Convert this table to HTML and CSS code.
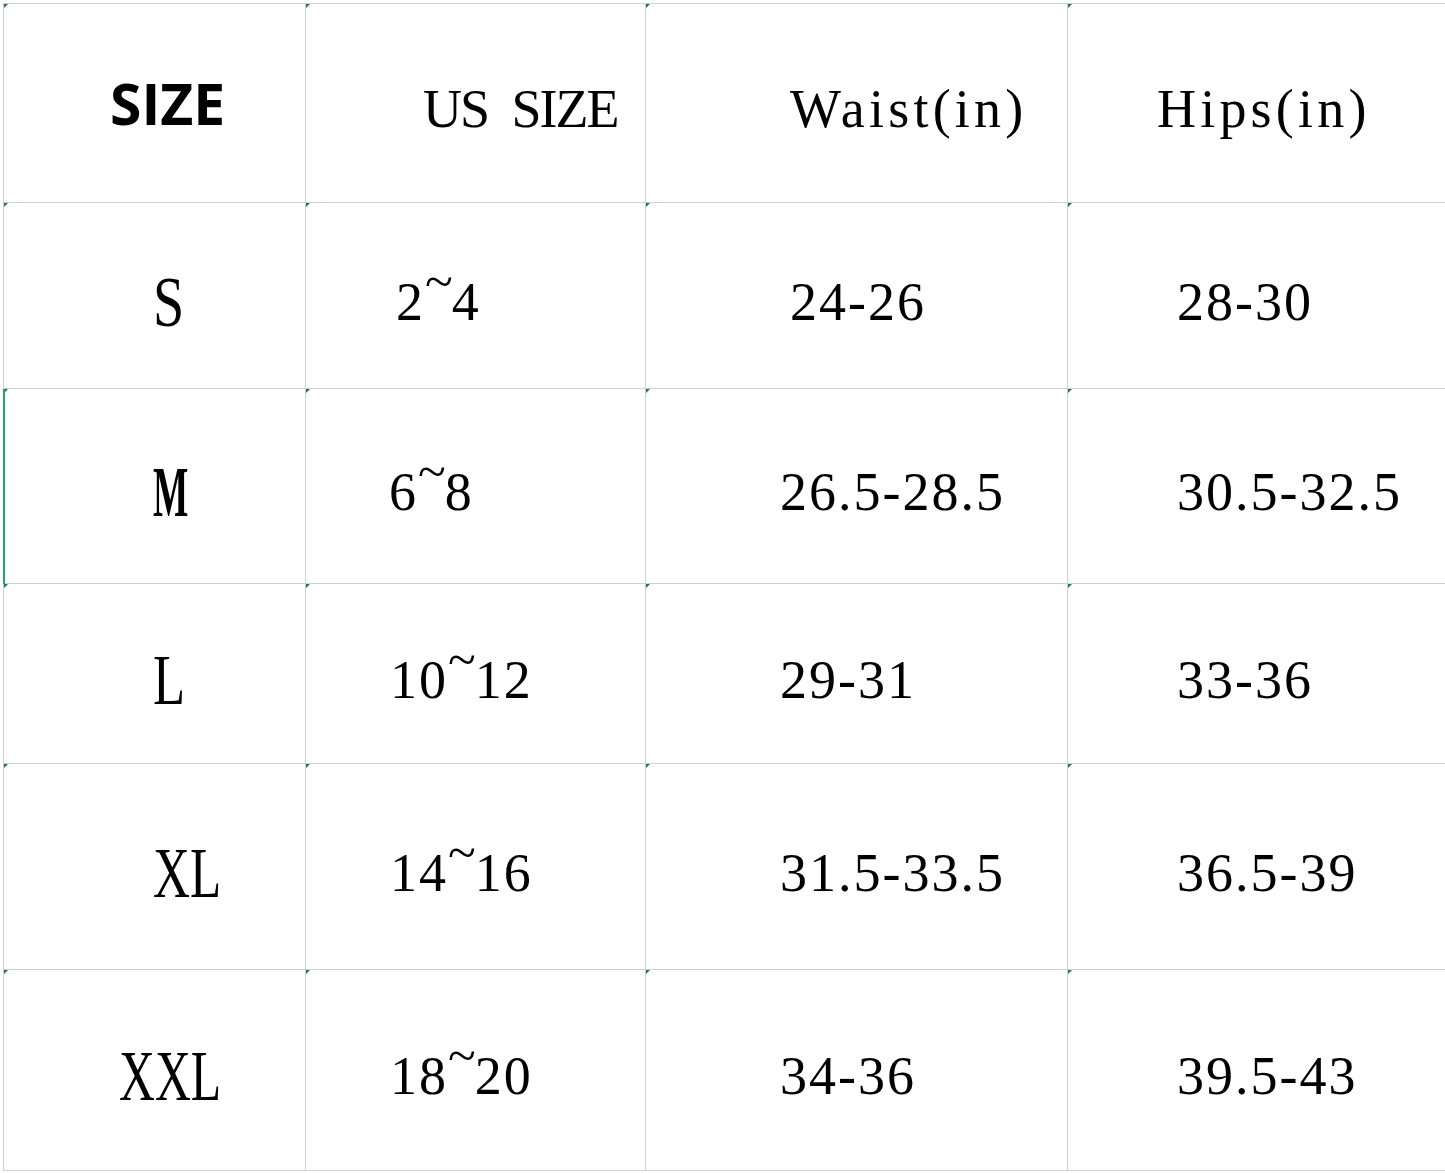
FILE: index.html
```html
<!DOCTYPE html>
<html lang="en">
<head>
<meta charset="utf-8">
<title>Size Chart</title>
<link rel="stylesheet" href="styles.css">
</head>
<body>
<div class="sheet">
  <div class="cell c1 hdr-sans pl-size"><span class="t">SIZE</span></div>
  <div class="cell c2 hdr pl-us"><span class="t">US SIZE</span></div>
  <div class="cell c3 hdr pl-waist"><span class="t">Waist(in)</span></div>
  <div class="cell c4 hdr pl-hips"><span class="t">Hips(in)</span></div>

  <div class="cell c1 sz"><span class="g g-s">S</span></div>
  <div class="cell c2 num pl-24"><span class="t">2<span class="tl">~</span>4</span></div>
  <div class="cell c3 num pl-waist"><span class="t">24-26</span></div>
  <div class="cell c4 num pl-hipsd"><span class="t">28-30</span></div>

  <div class="cell c1 sz sel"><span class="g g-m">M</span></div>
  <div class="cell c2 num pl-68"><span class="t">6<span class="tl">~</span>8</span></div>
  <div class="cell c3 num pl-waistd"><span class="t">26.5-28.5</span></div>
  <div class="cell c4 num pl-hipsd"><span class="t">30.5-32.5</span></div>

  <div class="cell c1 sz"><span class="g g-l">L</span></div>
  <div class="cell c2 num pl-usd"><span class="t">10<span class="tl">~</span>12</span></div>
  <div class="cell c3 num pl-waistd"><span class="t">29-31</span></div>
  <div class="cell c4 num pl-hipsd"><span class="t">33-36</span></div>

  <div class="cell c1 sz"><span class="g g-xl">XL</span></div>
  <div class="cell c2 num pl-usd"><span class="t">14<span class="tl">~</span>16</span></div>
  <div class="cell c3 num pl-waistd"><span class="t">31.5-33.5</span></div>
  <div class="cell c4 num pl-hipsd"><span class="t">36.5-39</span></div>

  <div class="cell c1 sz pl-xxl"><span class="g g-xxl">XXL</span></div>
  <div class="cell c2 num pl-usd"><span class="t">18<span class="tl">~</span>20</span></div>
  <div class="cell c3 num pl-waistd"><span class="t">34-36</span></div>
  <div class="cell c4 num pl-hipsd"><span class="t">39.5-43</span></div>
</div>
</body>
</html>
```
FILE: styles.css
```css
html, body {
  margin: 0;
  padding: 0;
  background: #ffffff;
  overflow: hidden;
}

body {
  padding: 3px 0 0 3px;
  width: 1445px;
  height: 1173px;
  box-sizing: border-box;
}

.sheet {
  display: grid;
  grid-template-columns: 302px 340px 422px 378px;
  grid-template-rows: 199px 186px 195px 180px 206px 201px;
  border-top: 1px solid #cdd0d7;
  border-left: 1px solid #cdd0d7;
  width: max-content;
  color: #000;
}

.cell {
  position: relative;
  box-sizing: border-box;
  border-right: 1px solid #cdd0d7;
  border-bottom: 1px solid #cdd0d7;
  display: flex;
  align-items: center;
  white-space: nowrap;
  line-height: 1;
  padding-top: 12px;
}

.cell::before {
  content: "";
  position: absolute;
  top: 0;
  left: 0;
  width: 0;
  height: 0;
  border-top: 4px solid #1f7a2e;
  border-right: 4px solid transparent;
}

.sel::after {
  content: "";
  position: absolute;
  top: 0;
  bottom: -1px;
  left: -1px;
  width: 2px;
  background: #22a565;
}

.t {
  display: block;
}

.hdr-sans {
  font-family: "Open Sans", "Liberation Sans", sans-serif;
  font-weight: 700;
  font-size: 57px;
  padding-top: 0;
}

.hdr {
  font-family: "Liberation Serif", serif;
  font-size: 54px;
  letter-spacing: 4.2px;
}

.c2.hdr {
  letter-spacing: -2px;
  word-spacing: 12px;
}

.num {
  font-family: "Liberation Serif", serif;
  font-size: 54px;
  letter-spacing: 2px;
}

.tl {
  display: inline-block;
  line-height: 0;
  vertical-align: 0.42em;
  font-size: 0.95em;
  width: 0.52em;
  text-align: center;
  letter-spacing: 0;
}

.sz {
  font-family: "Liberation Serif", serif;
  font-size: 72px;
  padding-left: 149px;
}

.g {
  display: inline-block;
  transform-origin: left center;
}

.g-s { transform: scaleX(0.78); }
.g-m { transform: scaleX(0.52); font-weight: 700; }
.g-l { transform: scaleX(0.73); }
.g-xl { transform: scaleX(0.71); }
.g-xxl { transform: scaleX(0.69); }

.pl-size { padding-left: 106px; }
.pl-us { padding-left: 117px; }
.pl-waist { padding-left: 144px; }
.pl-hips { padding-left: 89px; }
.pl-24 { padding-left: 90px; }
.pl-68 { padding-left: 83px; }
.pl-usd { padding-left: 84px; }
.pl-waistd { padding-left: 134px; }
.pl-hipsd { padding-left: 109px; }
.sz.pl-xxl { padding-left: 115px; }
```
